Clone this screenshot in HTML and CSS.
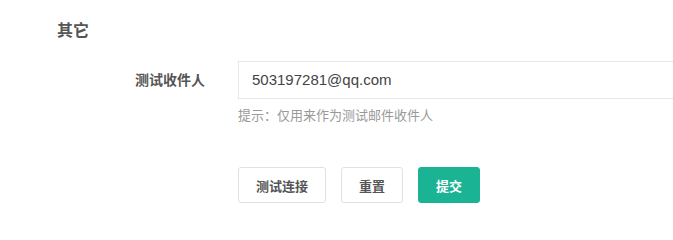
FILE: index.html
```html
<!DOCTYPE html>
<html lang="zh">
<head>
<meta charset="utf-8">
<link rel="stylesheet" href="styles.css">
</head>
<body>
<div class="page">
  <h3 class="section-title">其它</h3>
  <div class="form-row">
    <label class="form-label">测试收件人</label>
    <div class="form-field">
      <div class="input">503197281@qq.com</div>
      <div class="hint">提示：仅用来作为测试邮件收件人</div>
    </div>
  </div>
  <div class="actions">
    <button class="btn">测试连接</button>
    <button class="btn">重置</button>
    <button class="btn btn-primary">提交</button>
  </div>
</div>
</body>
</html>
```

FILE: styles.css
```css
html, body {
  margin: 0;
  padding: 0;
  background: #fff;
  overflow: hidden;
}
.page {
  font-family: "Liberation Sans", "Noto Sans CJK SC", sans-serif;
  color: #555;
  width: 673px;
  height: 228px;
  padding-top: 20px;
  box-sizing: border-box;
  overflow: hidden;
}
.section-title {
  margin: 0 0 0 57px;
  font-size: 16px;
  line-height: 22px;
  font-weight: bold;
  color: #555;
}
.form-row {
  display: flex;
  margin-top: 19px;
}
.form-label {
  width: 205px;
  flex: none;
  text-align: right;
  font-size: 14px;
  font-weight: bold;
  line-height: 38px;
  color: #555;
}
.form-field {
  margin-left: 33px;
  flex: 1;
  min-width: 0;
}
.input {
  height: 38px;
  box-sizing: border-box;
  border: 1px solid #e5e6e7;
  border-right: none;
  padding: 0 13px;
  font-size: 15px;
  line-height: 36px;
  color: #444;
}
.hint {
  margin-top: 8px;
  font-size: 13px;
  line-height: 18px;
  color: #999;
}
.actions {
  display: flex;
  gap: 15px;
  margin: 42px 0 0 238px;
}
.btn {
  height: 36px;
  padding: 0 17px;
  border: 1px solid #dfe1e5;
  border-radius: 3px;
  background: #fff;
  color: #555;
  font-family: "Liberation Sans", "Noto Sans CJK SC", sans-serif;
  font-size: 13px;
  font-weight: bold;
  cursor: pointer;
}
.btn-primary {
  background: #1ab394;
  border-color: #1ab394;
  color: #fff;
}
```
